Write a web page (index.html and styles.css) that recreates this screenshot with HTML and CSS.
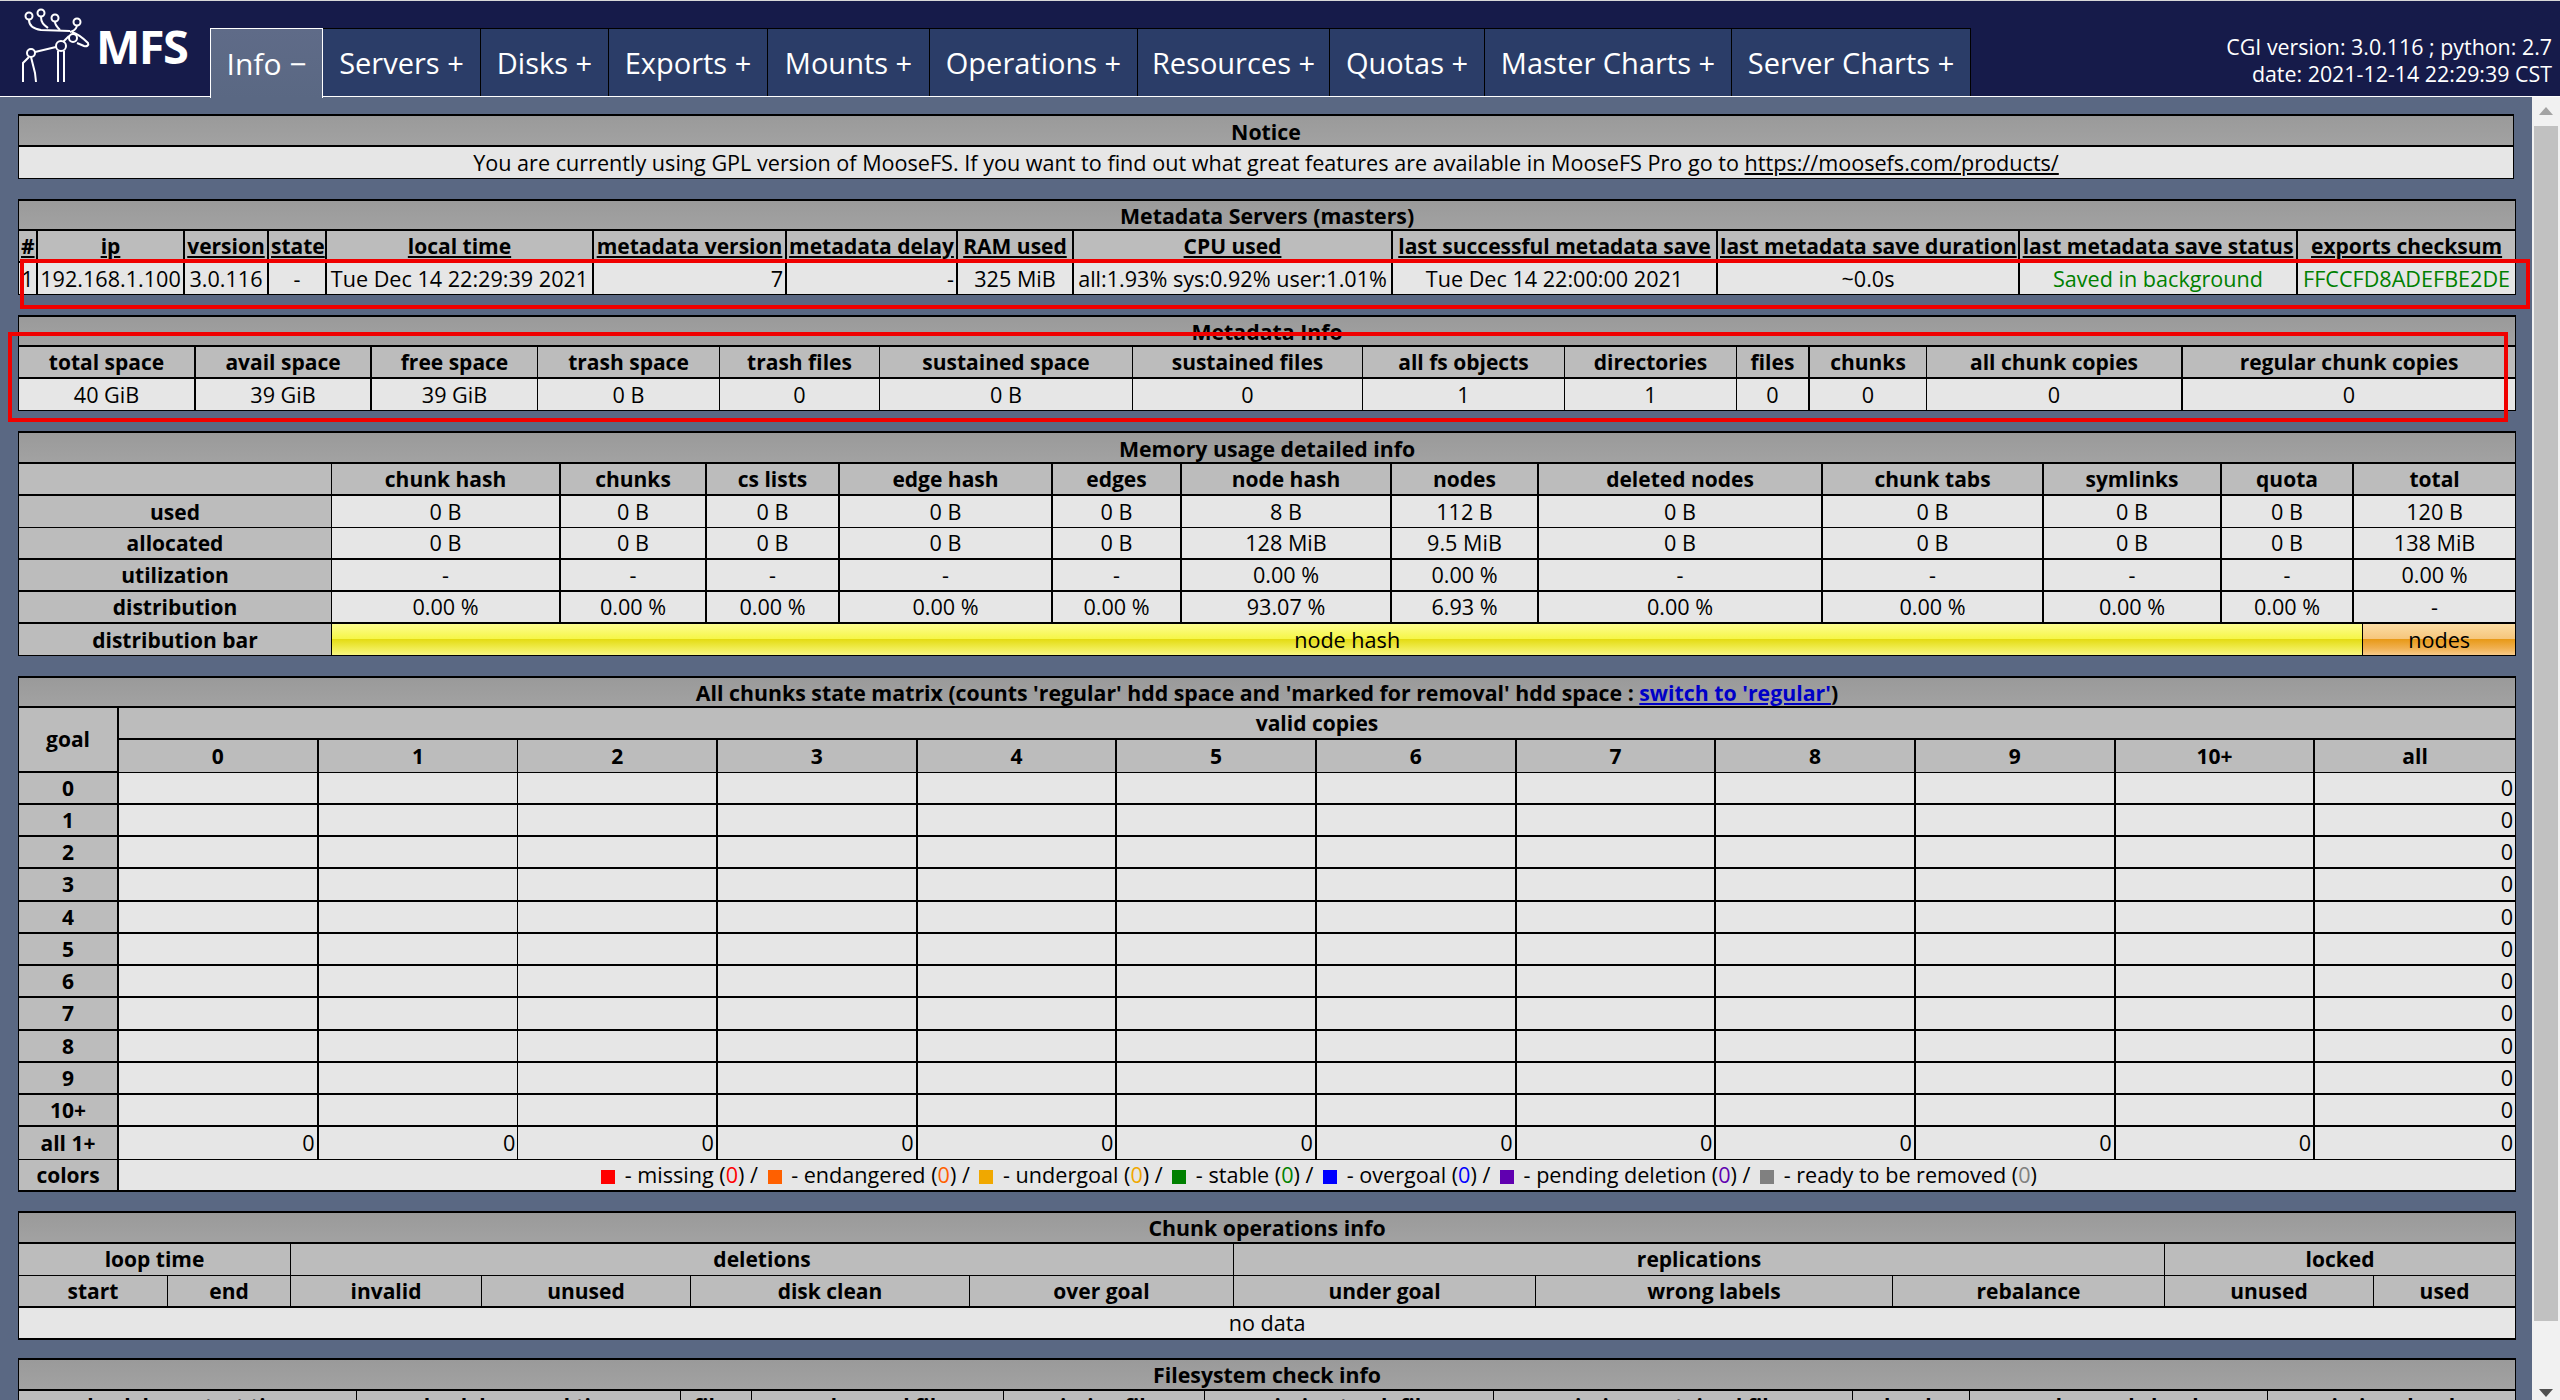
FILE: index.html
```
<!DOCTYPE html>
<html>
<head>
    <title>MFS Info</title>
    <link rel="stylesheet" href="styles.css">
</head>
<body>
    <header class="topbar">
        <div class="logo">
            <svg class="moose" viewBox="0 0 100 96" width="100" height="96">
                <g fill="none" stroke="#fff" stroke-width="2">
                    <circle cx="29" cy="15" r="3.5"/>
                    <circle cx="41" cy="12" r="3.5"/>
                    <circle cx="55" cy="17" r="3.5"/>
                    <circle cx="77" cy="21" r="3.5"/>
                    <path d="M29 19c0 6 5 9 12 10l29 1"/>
                    <path d="M41 16c0 6 3 8 7 11"/>
                    <path d="M55 21c0 3 2 5 5 8"/>
                    <path d="M77 25c-1 3-3 5-7 6"/>
                    <circle cx="73" cy="37" r="4"/>
                    <path d="M72 31c6 2 12 7 16 11 1 2-1 4-4 3l-7-3"/>
                    <circle cx="61" cy="45" r="5"/>
                    <path d="M63 41l6-6"/>
                    <circle cx="31" cy="52" r="4"/>
                    <path d="M35 51l21-5"/>
                    <path d="M58 50v31M64 50v31"/>
                    <path d="M29 56l-6 6v19"/>
                    <path d="M31 56l4 16 1 9"/>
                </g>
            </svg>
            <span class="logo-text">MFS</span>
        </div>
        <nav class="tabs">
            <a class="tab active">Info &minus;</a>
            <a class="tab w-servers">Servers +</a>
            <a class="tab w-disks">Disks +</a>
            <a class="tab w-exports">Exports +</a>
            <a class="tab w-mounts">Mounts +</a>
            <a class="tab w-operations">Operations +</a>
            <a class="tab w-resources">Resources +</a>
            <a class="tab w-quotas">Quotas +</a>
            <a class="tab w-master">Master Charts +</a>
            <a class="tab w-server">Server Charts +</a>
        </nav>
        <div class="version">
            <div>CGI version: 3.0.116 ; python: 2.7</div>
            <div>date: 2021-12-14 22:29:39 CST</div>
        </div>
    </header>

    <div class="page">
        <main class="content">
            <table class="tab-notice">
                <tr><th class="title">Notice</th></tr>
                <tr><td class="tc">You are currently using GPL version of MooseFS. If you want to find out what great features are available in MooseFS Pro go to <a class="plain" href="#">https://moosefs.com/products/</a></td></tr>
            </table>

            <table class="tab-masters">
                <colgroup>
                    <col class="c19"><col class="c147"><col class="c84"><col class="c58"><col class="c267"><col class="c193"><col class="c171"><col class="c116"><col class="c319"><col class="c325"><col class="c302"><col class="c278"><col class="c217">
                </colgroup>
                <tr><th class="title" colspan="13">Metadata Servers (masters)</th></tr>
                <tr class="sortable">
                    <th>#</th><th>ip</th><th>version</th><th>state</th><th>local time</th><th>metadata version</th><th>metadata delay</th><th>RAM used</th><th>CPU used</th><th>last successful metadata save</th><th>last metadata save duration</th><th>last metadata save status</th><th>exports checksum</th>
                </tr>
                <tr>
                    <td class="tc">1</td><td class="tc">192.168.1.100</td><td class="tc">3.0.116</td><td class="tc">-</td><td class="tc">Tue Dec 14 22:29:39 2021</td><td class="tr">7</td><td class="tr">-</td><td class="tc">325 MiB</td><td class="tc">all:1.93% sys:0.92% user:1.01%</td><td class="tc">Tue Dec 14 22:00:00 2021</td><td class="tc">~0.0s</td><td class="tc ok">Saved in background</td><td class="tc ok">FFCCFD8ADEFBE2DE</td>
                </tr>
            </table>

            <table class="tab-info">
                <colgroup>
                    <col class="c177"><col class="c176"><col class="c166"><col class="c182"><col class="c160"><col class="c253"><col class="c230"><col class="c202"><col class="c172"><col class="c73"><col class="c117"><col class="c256"><col class="c332">
                </colgroup>
                <tr><th class="title" colspan="13">Metadata Info</th></tr>
                <tr class="thick">
                    <th>total space</th><th>avail space</th><th>free space</th><th>trash space</th><th>trash files</th><th>sustained space</th><th>sustained files</th><th>all fs objects</th><th>directories</th><th>files</th><th>chunks</th><th>all chunk copies</th><th>regular chunk copies</th>
                </tr>
                <tr class="cells-center">
                    <td>40 GiB</td><td>39 GiB</td><td>39 GiB</td><td>0 B</td><td>0</td><td>0 B</td><td>0</td><td>1</td><td>1</td><td>0</td><td>0</td><td>0</td><td>0</td>
                </tr>
            </table>

            <table class="tab-memory">
                <colgroup>
                    <col class="c313"><col class="c229"><col class="c146"><col class="c133"><col class="c213"><col class="c129"><col class="c210"><col class="c147"><col class="c284"><col class="c221"><col class="c178"><col class="c132"><col class="c161">
                </colgroup>
                <tr><th class="title" colspan="13">Memory usage detailed info</th></tr>
                <tr class="thick">
                    <th></th><th>chunk hash</th><th>chunks</th><th>cs lists</th><th>edge hash</th><th>edges</th><th>node hash</th><th>nodes</th><th>deleted nodes</th><th>chunk tabs</th><th>symlinks</th><th>quota</th><th>total</th>
                </tr>
                <tr class="cells-center">
                    <th>used</th><td>0 B</td><td>0 B</td><td>0 B</td><td>0 B</td><td>0 B</td><td>8 B</td><td>112 B</td><td>0 B</td><td>0 B</td><td>0 B</td><td>0 B</td><td>120 B</td>
                </tr>
                <tr class="cells-center thick">
                    <th>allocated</th><td>0 B</td><td>0 B</td><td>0 B</td><td>0 B</td><td>0 B</td><td>128 MiB</td><td>9.5 MiB</td><td>0 B</td><td>0 B</td><td>0 B</td><td>0 B</td><td>138 MiB</td>
                </tr>
                <tr class="cells-center thick">
                    <th>utilization</th><td>-</td><td>-</td><td>-</td><td>-</td><td>-</td><td>0.00 %</td><td>0.00 %</td><td>-</td><td>-</td><td>-</td><td>-</td><td>0.00 %</td>
                </tr>
                <tr class="cells-center thick">
                    <th>distribution</th><td>0.00 %</td><td>0.00 %</td><td>0.00 %</td><td>0.00 %</td><td>0.00 %</td><td>93.07 %</td><td>6.93 %</td><td>0.00 %</td><td>0.00 %</td><td>0.00 %</td><td>0.00 %</td><td>-</td>
                </tr>
                <tr>
                    <th>distribution bar</th>
                    <td class="bar-cell" colspan="12">
                        <div class="dist-bar">
                            <div class="seg seg-yellow" style="width: 93%">node hash</div>
                            <div class="seg seg-orange" style="width: 7%">nodes</div>
                        </div>
                    </td>
                </tr>
            </table>

            <table class="tab-matrix">
                <colgroup>
                    <col class="c100">
                    <col class="m"><col class="m"><col class="m"><col class="m"><col class="m"><col class="m"><col class="m"><col class="m"><col class="m"><col class="m"><col class="m"><col class="m">
                </colgroup>
                <tr><th class="title" colspan="13">All chunks state matrix (counts 'regular' hdd space and 'marked for removal' hdd space : <a class="blue" href="#">switch to 'regular'</a>)</th></tr>
                <tr class="thick"><th rowspan="2">goal</th><th colspan="12">valid copies</th></tr>
                <tr class="numbers"><th>0</th><th>1</th><th>2</th><th>3</th><th>4</th><th>5</th><th>6</th><th>7</th><th>8</th><th>9</th><th>10+</th><th>all</th></tr>
                <tbody id="matrix"></tbody>
                <tr class="cells-right">
                    <th>all 1+</th><td>0</td><td>0</td><td>0</td><td>0</td><td>0</td><td>0</td><td>0</td><td>0</td><td>0</td><td>0</td><td>0</td><td>0</td>
                </tr>
                <tr class="thick">
                    <th>colors</th>
                    <td class="tc" colspan="12">
                        <i class="sq" style="background:#ff0000"></i> - missing (<span style="color:#ff0000">0</span>) /
                        <i class="sq" style="background:#ff6000"></i> - endangered (<span style="color:#ff6000">0</span>) /
                        <i class="sq" style="background:#f0a800"></i> - undergoal (<span style="color:#f0a800">0</span>) /
                        <i class="sq" style="background:#008000"></i> - stable (<span style="color:#008000">0</span>) /
                        <i class="sq" style="background:#0000ff"></i> - overgoal (<span style="color:#0000ff">0</span>) /
                        <i class="sq" style="background:#6000b0"></i> - pending deletion (<span style="color:#6000b0">0</span>) /
                        <i class="sq" style="background:#808080"></i> - ready to be removed (<span style="color:#808080">0</span>)
                    </td>
                </tr>
            </table>

            <table class="tab-ops">
                <colgroup>
                    <col class="c149"><col class="c123"><col class="c191"><col class="c209"><col class="c279"><col class="c264"><col class="c302"><col class="c357"><col class="c272"><col class="c209"><col class="c141">
                </colgroup>
                <tr><th class="title" colspan="11">Chunk operations info</th></tr>
                <tr><th colspan="2">loop time</th><th colspan="4">deletions</th><th colspan="3">replications</th><th colspan="2">locked</th></tr>
                <tr class="thick"><th>start</th><th>end</th><th>invalid</th><th>unused</th><th>disk clean</th><th>over goal</th><th>under goal</th><th>wrong labels</th><th>rebalance</th><th>unused</th><th>used</th></tr>
                <tr class="thick"><td class="tc" colspan="11">no data</td></tr>
            </table>

            <table class="tab-fsck">
                <colgroup>
                    <col class="c338"><col class="c324"><col class="c71"><col class="c252"><col class="c201"><col class="c289"><col class="c359"><col class="c117"><col class="c298"><col class="c247">
                </colgroup>
                <tr><th class="title" colspan="10">Filesystem check info</th></tr>
                <tr><th>check loop start time</th><th>check loop end time</th><th>files</th><th>under-goal files</th><th>missing files</th><th>missing trash files</th><th>missing sustained files</th><th>chunks</th><th>under-goal chunks</th><th>missing chunks</th></tr>
            </table>

            <div class="mark mark-masters"></div>
            <div class="mark mark-info"></div>
        </main>
        <aside class="scrollbar">
            <span class="arrow up"></span>
            <div class="thumb"></div>
            <span class="arrow down"></span>
        </aside>
    </div>

    <script>
        var labels = ['0', '1', '2', '3', '4', '5', '6', '7', '8', '9', '10+'];
        var html = '';
        for (var i = 0; i < labels.length; i++) {
            html += '<tr class="cells-right thick"><th>' + labels[i] + '</th>';
            for (var j = 0; j < 11; j++) html += '<td></td>';
            html += '<td>0</td></tr>';
        }
        document.getElementById('matrix').innerHTML = html;
    </script>
</body>
</html>
```
FILE: styles.css
```
html, body {
    margin: 0;
    height: 1400px;
    overflow: hidden;
}
body {
    display: flex;
    flex-direction: column;
    font-family: "Open Sans", "Noto Sans", sans-serif;
    font-size: 21.6px;
    color: #000;
    background: #5a6883;
}

/* top bar */
.topbar {
    display: flex;
    align-items: flex-end;
    height: 96px;
    box-sizing: border-box;
    flex: none;
    background: #161b4a;
    border-top: 1px solid #d8d8d8;
    position: relative;
}
.logo {
    display: flex;
    align-items: flex-start;
    width: 210px;
    height: 95px;
    flex: none;
}
.moose {
    flex: none;
}
.logo-text {
    margin: 14px 0 0 -4px;
    color: #fff;
    font-weight: 700;
    font-size: 47px;
    line-height: 62px;
    letter-spacing: -1.5px;
}
.tabs {
    display: flex;
    height: 68px;
    flex: none;
    box-shadow: 0 1px 0 #fff;
}
.tab {
    display: flex;
    align-items: center;
    justify-content: center;
    box-sizing: border-box;
    width: 157px;
    color: #fff;
    font-size: 29px;
    background: #2b3d68;
    border-top: 1px solid #000;
    border-right: 1px solid #000;
}
.tab.active {
    width: 113px;
    position: relative;
    z-index: 1;
    font-size: 30px;
    background: linear-gradient(#5f6b88, #5a6883);
    border: 1px solid #fff;
    border-bottom: 0;
    height: 70px;
    margin-bottom: -2px;
}
.tab.w-servers { width: 158px; }
.tab.w-disks { width: 128px; }
.tab.w-exports { width: 159px; }
.tab.w-mounts { width: 162px; }
.tab.w-operations { width: 208px; }
.tab.w-resources { width: 192px; }
.tab.w-quotas { width: 155px; }
.tab.w-master { width: 247px; }
.tab.w-server { width: 239px; }
.version {
    position: absolute;
    top: 32px;
    right: 8px;
    color: #fff;
    font-size: 21.4px;
    line-height: 27px;
    text-align: right;
}

/* page */
.page {
    display: flex;
    flex: 1;
    min-height: 0;
    border-top: 1px solid #fff;
}
.content {
    position: relative;
    flex: 1;
    overflow: hidden;
    padding: 17px 18px 0;
}
table {
    width: 2496px;
    table-layout: fixed;
    border-collapse: separate;
    border-spacing: 0;
    margin-bottom: 20px;
    border-top: 2px solid #000;
    border-left: 1px solid #000;
    border-right: 1px solid #000;
    background: #e6e6e6;
}
th, td {
    box-sizing: border-box;
    height: 32px;
    padding: 0 2px;
    font-weight: 400;
    line-height: 28px;
    white-space: nowrap;
    overflow: hidden;
    border-bottom: 1px solid #000;
    border-right: 1px solid #000;
}
th {
    padding-top: 1px;
    font-size: 21px;
    font-weight: 700;
    line-height: 27px;
    text-align: center;
    background: #bcbcbc;
}
th:last-child, td:last-child {
    border-right: 0;
}
th.title {
    height: 30px;
    font-size: 21.3px;
    background: linear-gradient(#9a9a9a, #a2a2a2);
    border-bottom-width: 2px;
}
.thick > th, .thick > td {
    border-bottom-width: 2px;
}
.tc { text-align: center; }
.tr { text-align: right; }
.cells-center td { text-align: center; }
.cells-right td { text-align: right; }
.ok { color: #008000; }
.plain { color: #000; }
.blue { color: #0000c8; }
.sortable th {
    text-decoration: underline;
    border-bottom-width: 2px;
}

/* per table row heights and line weights */
.tab-notice th.title,
.tab-memory th.title,
.tab-ops th.title,
.tab-fsck th.title {
    height: 31px;
}
.tab-matrix { margin-bottom: 19px; }
.tab-ops { margin-bottom: 18px; }
.tab-matrix th:not(.title), .tab-matrix td {
    height: 32.25px;
}
.tab-masters th, .tab-masters td,
.tab-memory th, .tab-memory td,
.tab-matrix th, .tab-matrix td {
    border-right-width: 2px;
}
.tab-memory tr > :first-child {
    border-right-width: 1px;
}
.tab-matrix .cells-right > :nth-child(3),
.tab-matrix .numbers > :nth-child(2) {
    border-right-width: 1px;
}
.tab-matrix tr > :last-child,
.tab-memory tr > :last-child,
.tab-masters tr > :last-child {
    border-right-width: 0;
}
.tab-info tr > :nth-child(-n+2),
.tab-info tr > :nth-child(10),
.tab-info tr > :nth-child(12) {
    border-right-width: 2px;
}
.tab-info tr > .title {
    border-right-width: 0;
}

col.c19 { width: 19px; }
col.c147 { width: 147px; }
col.c84 { width: 84px; }
col.c58 { width: 58px; }
col.c267 { width: 267px; }
col.c193 { width: 193px; }
col.c171 { width: 171px; }
col.c116 { width: 116px; }
col.c319 { width: 319px; }
col.c325 { width: 325px; }
col.c302 { width: 302px; }
col.c278 { width: 278px; }
col.c217 { width: 217px; }
col.c177 { width: 177px; }
col.c176 { width: 176px; }
col.c166 { width: 166px; }
col.c182 { width: 182px; }
col.c160 { width: 160px; }
col.c253 { width: 253px; }
col.c230 { width: 230px; }
col.c202 { width: 202px; }
col.c172 { width: 172px; }
col.c73 { width: 73px; }
col.c117 { width: 117px; }
col.c256 { width: 256px; }
col.c332 { width: 332px; }
col.c313 { width: 313px; }
col.c229 { width: 229px; }
col.c146 { width: 146px; }
col.c133 { width: 133px; }
col.c213 { width: 213px; }
col.c129 { width: 129px; }
col.c210 { width: 210px; }
col.c284 { width: 284px; }
col.c221 { width: 221px; }
col.c178 { width: 178px; }
col.c132 { width: 132px; }
col.c161 { width: 161px; }
col.c100 { width: 100px; }
col.m { width: 199.67px; }
col.c149 { width: 149px; }
col.c123 { width: 123px; }
col.c191 { width: 191px; }
col.c209 { width: 209px; }
col.c279 { width: 279px; }
col.c264 { width: 264px; }
col.c357 { width: 357px; }
col.c272 { width: 272px; }
col.c141 { width: 141px; }
col.c338 { width: 338px; }
col.c324 { width: 324px; }
col.c71 { width: 71px; }
col.c252 { width: 252px; }
col.c201 { width: 201px; }
col.c289 { width: 289px; }
col.c359 { width: 359px; }
col.c298 { width: 298px; }
col.c247 { width: 247px; }

/* distribution bar */
.bar-cell {
    padding: 0;
}
.dist-bar {
    display: flex;
    height: 31px;
}
.seg {
    box-sizing: border-box;
    text-align: center;
    line-height: 31px;
}
.seg-yellow {
    background: linear-gradient(#fcfc90 0%, #f6f648 47%, #e4dc14 50%, #f0ec50 78%, #f8f680 100%);
}
.seg-orange {
    background: linear-gradient(#fbdca4 0%, #f6c67c 47%, #e89a18 50%, #f0b050 78%, #f8ca88 100%);
    border-left: 1px solid #000;
}

.sq {
    display: inline-block;
    width: 14px;
    height: 14px;
    margin: 0 4px;
    vertical-align: -1px;
}

/* red marks over the tables */
.mark {
    position: absolute;
    box-sizing: border-box;
    border: 4px solid #f00000;
    pointer-events: none;
}
.mark-masters {
    left: 20px;
    top: 162px;
    width: 2510px;
    height: 50px;
}
.mark-info {
    left: 8px;
    top: 235px;
    width: 2500px;
    height: 90px;
}

/* scrollbar */
.scrollbar {
    display: flex;
    flex-direction: column;
    align-items: center;
    flex: none;
    box-sizing: border-box;
    width: 28px;
    background: #f1f1f1;
}
.arrow {
    display: block;
    flex: none;
    width: 0;
    height: 0;
    border-left: 7px solid transparent;
    border-right: 7px solid transparent;
}
.arrow.up {
    margin: 10px 0 11px;
    border-bottom: 8px solid #a3a3a3;
}
.thumb {
    width: 24px;
    height: 1195px;
    background: #c1c1c1;
    flex: none;
}
.arrow.down {
    margin-top: auto;
    margin-bottom: 3px;
    border-top: 8px solid #505050;
}
```
